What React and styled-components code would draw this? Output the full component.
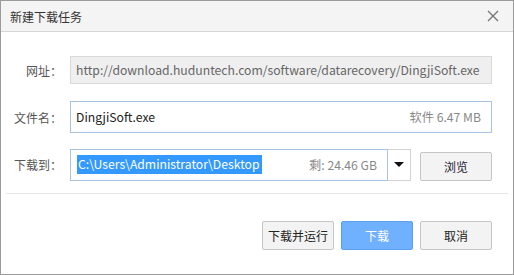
import React from "react";
import styled, { createGlobalStyle } from "styled-components";

const Global = createGlobalStyle`
  html, body { margin: 0; padding: 0; background: #fff; }
  body { font-family: "Noto Sans CJK SC", "Noto Sans", sans-serif; }
`;

const Dialog = styled.div`
  box-sizing: border-box;
  width: 514px;
  height: 275px;
  border: 1px solid #9b9b9b;
  background: #fff;
  display: flex;
  flex-direction: column;
  font-size: 12px;
  color: #333;
`;

const TitleBar = styled.div`
  height: 30px;
  flex: none;
  background: #f4f4f4;
  border-bottom: 1px solid #d7d7d7;
  display: flex;
  align-items: center;
  justify-content: space-between;
  padding: 0 14px 0 9px;
`;

const Title = styled.span`
  font-size: 12px;
  color: #333;
`;

const Close = styled.button`
  border: 0;
  background: none;
  padding: 0;
  width: 12px;
  height: 12px;
  display: flex;
  cursor: pointer;
`;

const Form = styled.div`
  display: grid;
  grid-template-columns: 61px 1fr;
  column-gap: 8px;
  align-items: center;
  padding: 24px 21px 0 0;
`;

const Label = styled.div`
  text-align: right;
  color: #555;
  margin-top: ${(p) => p.$mt || 0}px;
`;

const Field = styled.div`
  box-sizing: border-box;
  height: ${(p) => p.$h}px;
  margin-top: ${(p) => p.$mt || 0}px;
  border: 1px solid ${(p) => (p.$readonly ? "#d9d9d9" : "#a9c3e3")};
  background: ${(p) => (p.$readonly ? "#efefef" : "#fff")};
  display: flex;
  align-items: center;
  justify-content: space-between;
  padding: 0 10px 0 5px;
  font-size: 12.2px;
  color: ${(p) => (p.$readonly ? "#666" : "#222")};
  white-space: nowrap;
  overflow: hidden;
`;

const Meta = styled.span`
  color: #888;
`;

const PathRow = styled.div`
  display: flex;
  align-items: center;
  margin-top: ${(p) => p.$mt || 0}px;
`;

const PathField = styled(Field)`
  flex: none;
  width: 318px;
  padding: 0 10px 0 6px;
`;

const Selected = styled.span`
  background: #3399ff;
  color: #fff;
  line-height: 19px;
  padding: 0 2px 0 1px;
`;

const Drop = styled.div`
  box-sizing: border-box;
  width: 23px;
  height: 32px;
  border: 1px solid #d3d3d3;
  border-left: 0;
  display: flex;
  align-items: center;
  justify-content: center;
`;

const Arrow = styled.span`
  width: 0;
  height: 0;
  border-left: 5px solid transparent;
  border-right: 5px solid transparent;
  border-top: 5px solid #111;
`;

const Button = styled.button`
  box-sizing: border-box;
  width: 72px;
  height: 29px;
  border-radius: 2px;
  border: 1px solid ${(p) => (p.$primary ? "#5f9ff0" : "#c6c6c6")};
  background: ${(p) => (p.$primary ? "#6fb0ff" : "#f3f3f3")};
  color: ${(p) => (p.$primary ? "#fff" : "#222")};
  font-family: inherit;
  font-size: 12px;
  padding: 0;
  cursor: pointer;
`;

const BrowseButton = styled(Button)`
  margin-left: 9px;
  margin-top: 4px;
  color: #223;
`;

const Divider = styled.div`
  height: 1px;
  background: #e6e6e6;
  margin: 12px 5px 0 5px;
`;

const Footer = styled.div`
  display: flex;
  justify-content: flex-end;
  gap: 7px;
  padding: 27px 21px 0 0;
`;

export default function App() {
  return (
    <>
      <Global />
      <Dialog>
        <TitleBar>
          <Title>新建下载任务</Title>
          <Close aria-label="关闭">
            <svg width="12" height="12" viewBox="0 0 12 12">
              <path d="M1 1 L11 11 M11 1 L1 11" stroke="#777" strokeWidth="1.4" />
            </svg>
          </Close>
        </TitleBar>
        <Form>
          <Label>网址：</Label>
          <Field $h={28} $readonly>
            http://download.huduntech.com/software/datarecovery/DingjiSoft.exe
          </Field>
          <Label $mt={17}>文件名：</Label>
          <Field $h={32} $mt={17}>
            <span>DingjiSoft.exe</span>
            <Meta>软件 6.47 MB</Meta>
          </Field>
          <Label $mt={15}>下载到：</Label>
          <PathRow $mt={15}>
            <PathField $h={32}>
              <Selected>C:\Users\Administrator\Desktop</Selected>
              <Meta>剩: 24.46 GB</Meta>
            </PathField>
            <Drop>
              <Arrow />
            </Drop>
            <BrowseButton>浏览</BrowseButton>
          </PathRow>
        </Form>
        <Divider />
        <Footer>
          <Button>下载并运行</Button>
          <Button $primary>下载</Button>
          <Button>取消</Button>
        </Footer>
      </Dialog>
    </>
  );
}
